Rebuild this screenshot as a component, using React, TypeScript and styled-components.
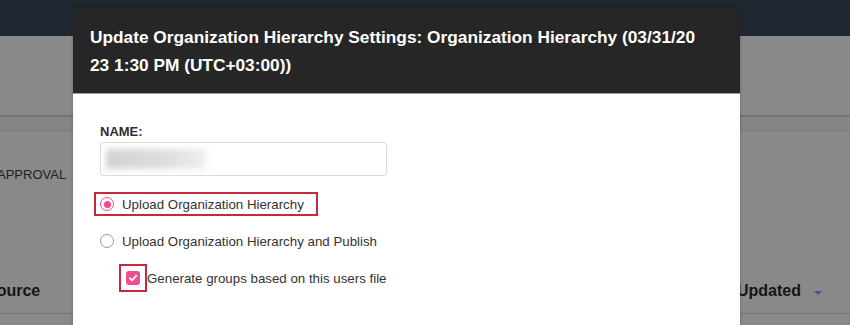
import styled, { createGlobalStyle } from "styled-components";

const GlobalStyle = createGlobalStyle`
  html, body {
    margin: 0;
    padding: 0;
  }
  body {
    width: 850px;
    height: 325px;
    overflow: hidden;
    background: #898989;
    font-family: "Liberation Sans", Arial, Helvetica, sans-serif;
  }
`;

const Page = styled.div`
  position: relative;
  width: 850px;
  height: 325px;
  overflow: hidden;
  background: #898989;
`;

const TopBar = styled.header`
  height: 36px;
  background: #1f2731;
`;

const SubHeader = styled.div`
  position: relative;
  height: 79px;
  background: #8a8a8a;
  box-shadow: 0 1px 2px rgba(0, 0, 0, 0.28);
`;

const TabBand = styled.div`
  height: 15px;
  background: #858585;
  border-bottom: 1px solid #7e7e7e;
`;

const Content = styled.section`
  padding: 36px 0 0;
`;

const ApprovalText = styled.div`
  margin-left: -3px;
  font-size: 13px;
  line-height: 15px;
  color: #1f1f1f;
`;

const TableHead = styled.div`
  display: flex;
  align-items: center;
  justify-content: space-between;
  height: 44px;
  margin-top: 87px;
  padding-right: 28px;
  border-bottom: 1px solid #767676;
`;

const HeadCell = styled.div<{ $shift?: number }>`
  display: flex;
  align-items: center;
  gap: 13px;
  margin-left: ${(p) => p.$shift ?? 0}px;
  font-size: 16px;
  font-weight: bold;
  color: #151515;
`;

const SortArrow = styled.span`
  width: 0;
  height: 0;
  margin-top: 4px;
  border-left: 4px solid transparent;
  border-right: 4px solid transparent;
  border-top: 4px solid #3d5a86;
`;

const Modal = styled.div`
  position: absolute;
  left: 73px;
  top: 8px;
  width: 667px;
  height: 340px;
  background: #ffffff;
  box-shadow: 0 0 3px rgba(0, 0, 0, 0.25);
`;

const ModalHeader = styled.h2`
  margin: 0;
  padding: 15px 40px 14px 17px;
  background: #262626;
  border-bottom: 1px solid #9c9c9c;
  color: #ffffff;
  font-size: 17.3px;
  font-weight: bold;
  line-height: 28px;
  word-break: break-all;
`;

const ModalBody = styled.div`
  padding: 30px 27px;
`;

const FieldLabel = styled.div`
  font-size: 13px;
  font-weight: bold;
  line-height: 15px;
  color: #2e2e2e;
  margin-bottom: 3px;
`;

const TextBox = styled.div`
  box-sizing: border-box;
  width: 287px;
  height: 34px;
  padding: 6px 5px;
  border: 1px solid #dcdcdc;
  border-radius: 3px;
  overflow: hidden;
`;

const BlurredValue = styled.div`
  width: 100px;
  height: 20px;
  background: linear-gradient(90deg, #d2d2d2 0%, #dcdcdc 55%, #efefef 100%);
  filter: blur(3px);
`;

const Options = styled.div`
  display: flex;
  flex-direction: column;
  align-items: flex-start;
  gap: 17px;
  margin-top: 18px;
`;

const Highlight = styled.div`
  outline: 2px solid #c42a3b;
`;

const OptionRow = styled.label<{ $indent?: number; $gap?: number }>`
  display: flex;
  align-items: center;
  gap: ${(p) => p.$gap ?? 8}px;
  height: 20px;
  margin-left: ${(p) => p.$indent ?? 0}px;
  font-size: 13.3px;
  color: #333333;
`;

const RadioHighlight = styled(Highlight)`
  margin-left: -4px;
  padding: 0 12px 0 4px;
`;

const Radio = styled.span<{ $checked?: boolean }>`
  box-sizing: border-box;
  display: flex;
  align-items: center;
  justify-content: center;
  width: 14px;
  height: 14px;
  border-radius: 50%;
  border: 1.5px solid ${(p) => (p.$checked ? "#ec4c89" : "#9a9a9a")};
  background: #ffffff;
  &::after {
    content: "";
    display: ${(p) => (p.$checked ? "block" : "none")};
    width: 7px;
    height: 7px;
    border-radius: 50%;
    background: #ec4c89;
  }
`;

const CheckHighlight = styled(Highlight)`
  padding: 5px;
`;

const Checkbox = styled.span`
  display: flex;
  align-items: center;
  justify-content: center;
  width: 14px;
  height: 14px;
  border-radius: 3px;
  background: #ee4f8f;
`;

export default function App() {
  return (
    <>
      <GlobalStyle />
      <Page>
        <TopBar />
        <SubHeader />
        <TabBand />
        <Content>
          <ApprovalText>APPROVAL</ApprovalText>
          <TableHead>
            <HeadCell $shift={-14}>Source</HeadCell>
            <HeadCell>
              Updated
              <SortArrow />
            </HeadCell>
          </TableHead>
        </Content>

        <Modal>
          <ModalHeader>
            Update Organization Hierarchy Settings: Organization Hierarchy (03/31/2023 1:30 PM (UTC+03:00))
          </ModalHeader>
          <ModalBody>
            <FieldLabel>NAME:</FieldLabel>
            <TextBox>
              <BlurredValue />
            </TextBox>
            <Options>
              <RadioHighlight>
                <OptionRow>
                  <Radio $checked />
                  Upload Organization Hierarchy
                </OptionRow>
              </RadioHighlight>
              <OptionRow>
                <Radio />
                Upload Organization Hierarchy and Publish
              </OptionRow>
              <OptionRow $indent={21} $gap={2}>
                <CheckHighlight>
                  <Checkbox>
                    <svg width="10" height="10" viewBox="0 0 10 10">
                      <path
                        d="M1.8 5.2 L4 7.3 L8.3 2.6"
                        fill="none"
                        stroke="#ffffff"
                        strokeWidth="1.8"
                        strokeLinecap="round"
                        strokeLinejoin="round"
                      />
                    </svg>
                  </Checkbox>
                </CheckHighlight>
                Generate groups based on this users file
              </OptionRow>
            </Options>
          </ModalBody>
        </Modal>
      </Page>
    </>
  );
}
